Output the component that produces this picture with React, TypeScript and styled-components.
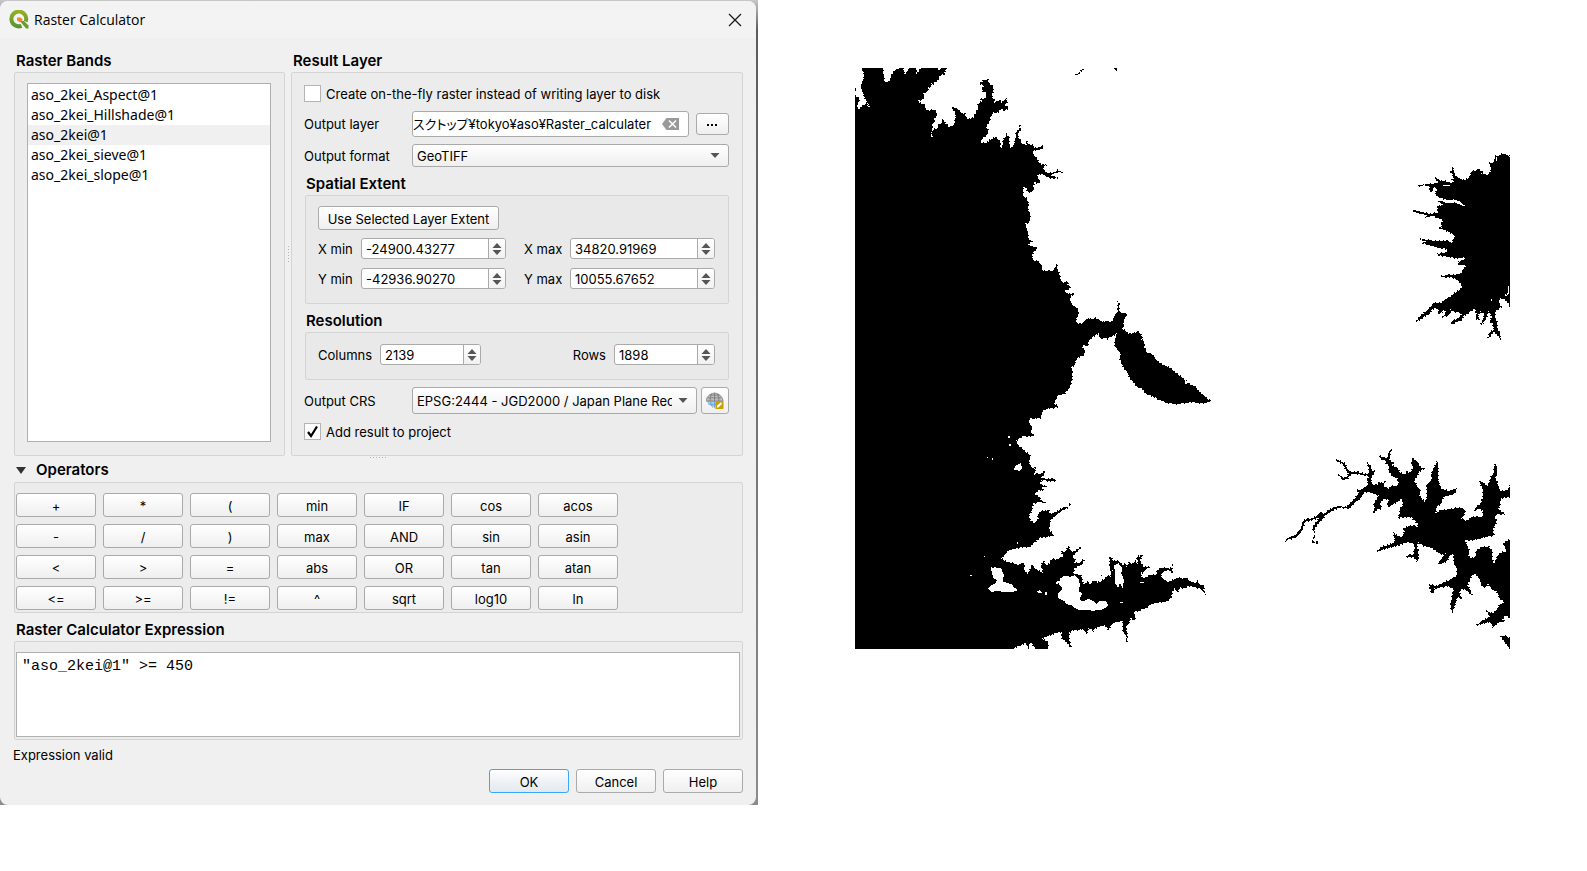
import React, { useState } from "react";
import styled, { createGlobalStyle, css } from "styled-components";

const GlobalStyle = createGlobalStyle`
  *, *::before, *::after { box-sizing: border-box; }
  body {
    margin: 0;
    background: #fff;
    color: #000;
    font-family: Inter, "Noto Sans CJK JP", sans-serif;
    font-size: 13px;
    line-height: 20px;
  }
  button, input, select, textarea { font: inherit; color: inherit; margin: 0; }
`;

const Page = styled.main`
  display: grid;
  grid-template-columns: minmax(0, 758fr) minmax(0, 829fr);
  align-items: start;
`;

const Backdrop = styled.div`
  background: linear-gradient(#c8c8c8, #5c5c5c 30px, #8c8c8c);
  padding: 1px 2px 0 0;
`;

const Dialog = styled.section`
  background: #f0f0f0;
  border-radius: 8px;
  overflow: hidden;
`;

const TitleBar = styled.header`
  display: flex;
  align-items: center;
  gap: 5px;
  height: 37px;
  padding: 0 14px 0 9px;
  background: #f3f3f3;
  font-family: "Open Sans", sans-serif;
`;

const Title = styled.h1`
  flex: 1;
  margin: 0;
  font-size: 14px;
  font-weight: 400;
`;

const CloseButton = styled.button`
  display: flex;
  padding: 0;
  border: 0;
  background: none;
`;

const Body = styled.div`
  padding: 14px 13px 12px 14px;
`;

const Columns = styled.div`
  display: grid;
  grid-template-columns: minmax(0, 271fr) 6px minmax(0, 452fr);
`;

const Section = styled.section`
  display: flex;
  flex-direction: column;
`;

const Heading = styled.h2`
  margin: 0;
  padding: 0 0 2px 2px;
  font-size: 15px;
  line-height: 18px;
  font-weight: 600;
`;

const panel = css`
  border: 1px solid #d4d4d4;
  border-radius: 2px;
  background: #ececec;
`;

const BandsPanel = styled.div`
  ${panel}
  flex: 1;
  display: flex;
  padding: 10px 13px 13px 12px;
`;

const BandList = styled.ul`
  flex: 1;
  margin: 0;
  padding: 1px 0 0;
  list-style: none;
  border: 1px solid #b0b0b0;
  background: #fff;
  font-family: "Noto Sans", sans-serif;
  font-size: 14px;
`;

const Band = styled.li<{ $selected?: boolean }>`
  padding-left: 3px;
  height: 20px;
  background: ${(p) => (p.$selected ? "#f0f0f0" : "transparent")};
`;

const Grip = styled.div<{ $vertical?: boolean }>`
  align-self: center;
  justify-self: center;
  margin: ${(p) => (p.$vertical ? "0" : "1px auto 0")};
  width: ${(p) => (p.$vertical ? "1px" : "17px")};
  height: ${(p) => (p.$vertical ? "17px" : "1px")};
  background: repeating-linear-gradient(
    ${(p) => (p.$vertical ? "180deg" : "90deg")},
    #b4b4b4 0 1px,
    transparent 1px 3px
  );
`;

const ResultPanel = styled.div`
  ${panel}
  padding: 12px 13px 15px 12px;
`;

const CheckLabel = styled.label`
  display: flex;
  align-items: center;
  gap: 5px;
  height: 17px;
  white-space: nowrap;
`;

const CheckBox = styled.input`
  appearance: none;
  width: 17px;
  height: 17px;
  border: 1px solid #b4b4b4;
  background: #fff;
`;

const CheckHolder = styled.span`
  display: grid;
  & > * { grid-area: 1 / 1; }
  svg { pointer-events: none; visibility: hidden; }
  input:checked + svg { visibility: visible; }
`;

const CheckRow = styled.div`
  margin-top: 9px;
`;

const FormRow = styled.div<{ $top: number; $height: number }>`
  display: grid;
  grid-template-columns: 108px minmax(0, 1fr);
  align-items: center;
  margin-top: ${(p) => p.$top}px;
  height: ${(p) => p.$height}px;
`;

const Field = styled.div<{ $gap: number }>`
  display: flex;
  align-items: center;
  gap: ${(p) => p.$gap}px;
`;

const outline = css`
  border: 1px solid #aaa;
  border-radius: 3px;
`;

const PathBox = styled.div`
  ${outline}
  flex: 1;
  min-width: 0;
  display: flex;
  align-items: center;
  height: 26px;
  padding-right: 9px;
  background: #fff;
`;

const PathInput = styled.input`
  flex: 1;
  min-width: 0;
  padding: 0;
  border: 0;
  background: transparent;
  font-feature-settings: "palt";
`;

const ClearButton = styled.button`
  display: flex;
  padding: 0;
  border: 0;
  background: none;
`;

const PushButton = styled.button<{ $width?: number; $height?: number; $primary?: boolean }>`
  ${outline}
  display: inline-flex;
  align-items: center;
  justify-content: center;
  flex: none;
  width: ${(p) => (p.$width ? `${p.$width}px` : "auto")};
  height: ${(p) => p.$height ?? 24}px;
  padding: 1px 4px 0;
  background: linear-gradient(#fff, #efefef);
  ${(p) =>
    p.$primary &&
    css`
      border-color: #3ea6f8;
      background: linear-gradient(#fdfdfd, #e2e8ef);
    `}
`;

const SelectBox = styled.span`
  display: grid;
  align-items: center;
  flex: 1;
  min-width: 0;
  & > * { grid-area: 1 / 1; }
  svg { justify-self: end; margin-right: 9px; pointer-events: none; }
`;

const Select = styled.select<{ $height: number }>`
  ${outline}
  appearance: none;
  width: 100%;
  min-width: 0;
  height: ${(p) => p.$height}px;
  padding: 0 24px 0 4px;
  background: linear-gradient(#fff, #efefef);
`;

const SubHeading = styled(Heading)`
  margin-top: 8px;
`;

const ExtentPanel = styled.div`
  ${panel}
  margin-left: 1px;
  background: #e9e9e9;
  padding: 10px 13px 14px 12px;
`;

const SpinGrid = styled.div`
  display: grid;
  grid-template-columns: 43px minmax(0, 1fr) 18px 46px minmax(0, 1fr);
  row-gap: 9px;
  margin-top: 8px;
  align-items: center;
`;

const XMax = styled.label`
  grid-column: 4;
`;

const ResolutionPanel = styled(ExtentPanel)`
  display: flex;
  align-items: center;
  justify-content: space-between;
  padding: 11px 13px 14px 12px;
`;

const SpinLabel = styled.label`
  display: flex;
  align-items: center;
  gap: 8px;
`;

const SpinFrame = styled.span<{ $width?: number }>`
  ${outline}
  display: flex;
  width: ${(p) => (p.$width ? `${p.$width}px` : "100%")};
  height: 21px;
  background: #fff;
  overflow: hidden;
`;

const SpinInput = styled.input`
  flex: 1;
  min-width: 0;
  padding: 0 0 0 4px;
  border: 0;
  background: transparent;
`;

const SpinSteps = styled.span`
  display: flex;
  flex-direction: column;
  justify-content: center;
  gap: 2px;
  width: 17px;
  border-left: 1px solid #aaa;
  background: linear-gradient(#fff, #f1f1f1);
`;

const StepButton = styled.button`
  display: flex;
  justify-content: center;
  padding: 0;
  border: 0;
  background: none;
`;

const OperatorHeader = styled.button`
  display: flex;
  align-items: center;
  gap: 10px;
  height: 20px;
  margin-top: 3px;
  padding: 0 2px 2px;
  border: 0;
  background: none;
  font-size: 15px;
  line-height: 18px;
  font-weight: 600;
`;

const OperatorPanel = styled.div`
  ${panel}
  display: grid;
  grid-template-columns: repeat(7, 80px);
  gap: 7px;
  margin-top: 1px;
  padding: 10px 1px 2px;
`;

const ExpressionHeading = styled(Heading)`
  margin-top: 8px;
`;

const ExpressionPanel = styled.div`
  ${panel}
  display: flex;
  padding: 10px 2px 2px 1px;
`;

const Expression = styled.textarea`
  flex: 1;
  height: 85px;
  padding: 4px 5px;
  border: 1px solid #b0b0b0;
  border-radius: 0;
  resize: none;
  background: #fff;
  font-family: "Liberation Mono", monospace;
  font-size: 15px;
`;

const Status = styled.p`
  margin: 5px 0 0 -1px;
`;

const Footer = styled.footer`
  display: flex;
  justify-content: flex-end;
  gap: 7px;
  margin-top: 4px;
`;

const MapPane = styled.figure`
  margin: 0;
  padding: 68px 77px 0 97px;
  svg { display: block; width: 100%; height: auto; }
`;

const QgisLogo = () => (
  <svg width="20" height="20" viewBox="0 0 20 20" aria-hidden="true">
    <defs>
      <linearGradient id="q" x1="0" y1="0" x2="0" y2="1">
        <stop offset="0" stopColor="#93b023" />
        <stop offset="1" stopColor="#589632" />
      </linearGradient>
    </defs>
    <path d="M12.500 15.800A7.400 7.400 0 1 1 16.700 11.500" fill="none" stroke="url(#q)" strokeWidth="4" />
    <path d="M11 11h4l4.500 4.500V18.500h-2.500z" fill="#6a9e2c" />
    <path d="M8 7.500h3.800l2 2.400-2.600 2.600L8 10.500z" fill="#f08a2c" />
  </svg>
);

const CloseIcon = () => (
  <svg width="14" height="14" viewBox="0 0 14 14" aria-hidden="true">
    <path d="M1 1l12 12M13 1L1 13" stroke="#1a1a1a" strokeWidth="1.3" />
  </svg>
);

const Arrow = ({ up }: { up?: boolean }) => (
  <svg width="10" height="5" viewBox="0 0 10 5" aria-hidden="true">
    <path d={up ? "M5 0l4.5 5h-9z" : "M5 5L.5 0h9z"} fill="#555" />
  </svg>
);

const GlobeIcon = () => (
  <svg width="20" height="20" viewBox="0 0 20 20" aria-hidden="true">
    <path d="M1.500 10a8.500 8.500 0 0 0 16 0z" fill="#a9d0f5" stroke="#6fa5d8" strokeWidth=".8" />
    <path d="M0 10Q1 2.500 9.500 1Q18 2.500 19 10z" fill="#bdbdbd" stroke="#7a7a7a" strokeWidth=".8" />
    <path d="M9.500 1v9M2 6.500h15M4 3.500h11M6 2Q4.500 6 4.500 10M13 2q1.500 4 1.500 8" fill="none" stroke="#707070" strokeWidth=".8" />
    <path d="M9.500 10v8M5 10q.5 4 2.500 7.500M2.500 13.500h14" fill="none" stroke="#5f9bd6" strokeWidth=".8" />
    <rect x="10.500" y="10" width="9" height="9" rx="1" fill="#c8a000" />
    <path d="M12 17.500l.5-2.500 4-3.500 1.500 1.500-4 4z" fill="#fff" />
  </svg>
);

type SpinProps = { id: string; value: string; width?: number; name: string };

const Spin = ({ id, value, width, name }: SpinProps) => {
  const [text, setText] = useState(value);
  return (
    <SpinFrame $width={width}>
      <SpinInput id={id} value={text} inputMode="decimal" onChange={(e) => setText(e.target.value)} />
      <SpinSteps>
        <StepButton type="button" aria-label={`Increase ${name}`}><Arrow up /></StepButton>
        <StepButton type="button" aria-label={`Decrease ${name}`}><Arrow /></StepButton>
      </SpinSteps>
    </SpinFrame>
  );
};

const Check = ({ label, checked }: { label: string; checked?: boolean }) => (
  <CheckLabel>
    <CheckHolder>
      <CheckBox type="checkbox" defaultChecked={checked} />
      <svg width="17" height="17" viewBox="0 0 17 17" aria-hidden="true">
        <path d="M4 9l3 4 6-9.500" fill="none" stroke="#000" strokeWidth="2.200" />
      </svg>
    </CheckHolder>
    {label}
  </CheckLabel>
);

/* Each part of the raster is drawn on a grid three times finer than its cells. */
const regions: { at: [number, number]; black: string; white?: string; line?: string }[] = [
  {
    at: [-15, -18],
    black:
      "M66,54 L128,54 130,62 132,94 138,96 148,94 153,88 155,74 165,62 178,56 190,54 192,70 197,72 204,62 208,54 226,54 230,60 226,76 236,66 244,54 295,54 296,62 304,54 320,54 312,68 317,76 308,72 298,78 290,94 282,96 280,102 274,100 272,112 266,110 262,124 250,130 252,142 246,150 232,152 236,158 252,164 256,178 268,182 274,178 286,182 290,196 282,206 284,216 276,220 278,234 272,246 274,264 278,262 276,244 282,240 284,236 294,238 296,224 304,222 310,208 316,222 324,226 328,236 334,230 345,222 346,204 350,198 346,186 336,174 342,172 356,180 366,192 374,190 378,204 388,208 402,202 410,184 416,178 414,162 426,154 424,148 436,146 440,138 438,124 430,126 426,118 434,108 428,104 420,100 416,98 428,96 432,88 438,92 444,86 446,100 452,106 458,108 460,124 456,134 458,146 464,152 462,160 480,150 484,158 498,148 502,156 492,166 506,174 494,182 484,176 470,190 458,186 456,198 450,202 448,218 440,226 438,232 444,240 442,254 428,264 420,276 430,280 446,276 452,268 462,264 468,262 474,270 480,274 480,292 486,294 490,270 500,254 506,262 508,284 512,294 520,290 526,270 528,246 538,240 540,226 542,238 534,248 534,262 542,270 544,280 556,286 560,284 558,272 566,284 578,286 584,294 600,292 610,286 604,298 584,300 576,306 582,318 592,326 594,336 604,346 620,344 608,352 612,362 618,368 632,370 648,366 652,360 662,366 640,370 632,378 654,384 640,386 626,382 612,374 600,372 592,376 594,388 602,392 594,400 584,396 580,408 582,420 574,426 560,424 560,412 550,412 550,438 560,446 566,462 564,480 570,492 568,518 556,520 558,536 562,542 564,566 576,574 562,584 592,594 584,604 578,610 576,622 584,634 594,632 600,640 606,652 608,664 616,664 628,662 636,666 644,656 650,646 652,660 658,668 660,690 668,698 686,696 680,704 694,712 684,718 670,724 678,730 704,732 690,738 692,760 702,770 712,774 716,790 708,806 706,818 712,822 728,822 738,808 750,806 760,810 766,804 776,812 790,818 800,814 818,816 822,798 834,790 832,776 834,766 832,754 838,764 836,780 842,794 862,792 852,806 850,826 846,840 L45,840 45,136 50,140 58,146 54,162 50,172 56,178 64,172 70,166 80,162 82,172 90,170 84,160 78,152 70,132 62,104 70,94 72,70Z M825,54h5v6l-3,3zM708,74l8,-6 2,3 -8,4zM722,64l5,-7 2,2 -5,7zM45,117h3v5h-3z",
  },
  {
    at: [65, 212],
    black:
      "M0,60 L460,85 468,120 472,132 486,132 500,122 512,116 526,120 536,118 544,128 560,124 580,126 584,108 594,98 606,100 622,102 612,112 610,136 604,146 616,152 626,162 640,160 654,156 664,166 670,184 674,206 680,218 694,222 702,230 712,244 730,256 752,264 766,278 780,288 796,302 812,314 826,320 838,336 852,346 864,360 872,356 868,366 840,370 820,366 800,368 770,372 740,368 720,360 706,352 680,342 666,326 652,320 640,306 630,294 624,280 612,264 604,250 600,236 602,222 594,210 586,200 586,180 590,160 576,168 562,176 552,172 548,178 540,172 536,160 524,166 512,176 504,186 504,198 490,194 486,204 494,212 492,226 478,230 468,238 464,254 454,262 458,290 450,320 440,334 432,342 412,346 408,358 402,370 414,380 398,384 380,386 366,394 362,414 340,416 330,414 324,428 336,440 330,454 342,468 322,464 304,470 286,484 294,496 306,508 318,520 330,528 0,600Z M-195,0H100V600H-195z",
    white: "M795,302h5v3h4v4h-4v3h-4zM662,178h3v3h-3z",
  },
  {
    at: [105, 352],
    black:
      "M-315,-100 L0,-100 0,0 208,0 206,16 216,22 210,36 222,46 206,48 190,46 166,64 178,80 190,90 200,98 212,108 206,122 210,136 216,142 222,150 226,142 224,158 216,166 232,162 244,162 256,150 252,164 242,174 260,176 286,178 290,184 262,182 244,180 240,192 256,200 244,202 250,212 236,210 222,222 240,232 242,242 258,248 236,246 220,250 216,264 216,270 206,288 212,304 222,310 236,296 234,284 244,272 256,274 266,270 270,282 290,276 304,266 320,260 322,264 306,272 290,284 270,300 268,330 280,346 262,350 240,352 220,370 208,382 190,380 164,386 146,390 136,402 124,416 130,420 142,426 160,430 176,436 186,428 194,436 192,448 202,464 210,450 216,434 226,448 240,454 252,460 244,436 250,422 258,436 270,430 276,416 288,420 300,414 312,410 304,394 316,398 326,378 330,392 340,396 364,380 346,400 336,408 346,422 340,430 356,430 374,416 366,434 350,440 342,446 340,460 352,464 364,466 366,484 372,494 384,484 390,494 400,482 412,488 424,484 436,474 444,466 452,470 458,450 450,434 448,410 456,416 460,424 476,424 488,434 500,440 508,428 518,432 526,424 534,436 532,416 548,402 540,420 548,440 566,442 552,450 542,460 544,474 560,472 574,464 590,464 594,450 606,442 620,448 634,444 638,434 636,458 628,450 616,452 602,464 606,476 624,486 640,480 654,474 668,476 680,474 690,486 708,490 712,480 718,494 734,498 730,508 738,524 722,506 700,500 684,498 672,506 660,502 652,516 644,504 636,516 634,530 622,544 600,546 584,550 572,552 560,564 544,568 536,574 522,572 526,600 512,594 506,612 498,620 502,650 490,636 488,614 490,600 470,606 454,612 446,630 436,614 410,622 400,632 386,622 380,640 368,628 340,630 326,638 328,662 334,684 318,664 306,656 306,636 294,636 270,646 258,650 246,656 266,668 262,686 228,686 210,664 206,682 196,668 180,676 156,687 -315,687Z M326,252h6v3h-6zM499,656h3v8h-3z",
    white:
      "M92,436 L98,446 104,442 124,446 128,456 132,466 128,484 140,488 156,494 162,502 174,510 160,516 130,516 110,512 96,516 84,506 90,498 104,492 112,480 100,474 96,460 92,444Z M300,476 L312,468 330,470 344,466 356,476 360,494 356,514 366,520 358,540 370,544 384,536 400,544 410,552 418,542 438,544 446,556 430,568 400,572 370,570 350,568 334,556 318,552 314,544 296,536 294,522 304,512 306,502 296,494Z M160,150 L168,136 182,130 186,144 180,152Z M462,436 L476,430 486,444 484,460 492,480 488,504 480,490 474,504 466,490 466,464Z M143,48h6v5h-6zM148,73h6v5h-6zM81,111h3v4h-3zM95,114h4v5h-4zM72,407h4v4h-4zM31,464h5v4h-5zM171,366h3v6h-3zM480,545h9v4h-9zM226,510l8,4 4,-5 8,9 -8,2 -6,-3zM256,516h5v8h-5zM384,484l4,-8v10zM288,486l8,-4 2,5 -8,8zM541,486h12v3h-12z",
    line: "M452,412v34l6,24M494,430l8,30M536,406l6,40M590,456l14,-10 32,2M424,466v3M372,492l-10,30M436,474l8,14 14,-18M546,460l10,-14",
  },
  {
    at: [415, 362],
    black:
      "M262,180 L276,180 286,170 296,166 292,150 298,140 290,136 276,134 250,130 240,136 232,146 218,150 208,136 214,138 218,146 230,142 236,130 228,120 222,106 212,98 196,90 210,92 224,100 232,116 242,126 262,126 286,132 298,130 296,112 292,98 302,110 306,122 316,124 306,136 302,150 308,164 322,166 328,156 336,160 344,156 340,168 356,176 366,166 378,170 386,160 384,146 370,140 356,124 358,106 348,100 350,92 334,88 326,76 340,82 352,84 358,64 362,62 360,80 356,90 370,98 366,106 384,116 390,128 404,134 410,126 420,130 430,112 424,100 428,86 436,92 444,96 450,110 460,116 448,124 440,140 432,152 444,172 450,182 448,198 464,216 470,206 472,164 486,150 484,132 494,110 502,94 504,130 506,160 514,176 526,180 538,184 560,174 554,190 540,196 520,200 514,220 500,230 496,250 516,240 540,238 570,232 586,240 582,256 574,266 590,274 604,262 624,260 640,264 638,240 624,236 612,244 622,228 632,222 640,200 640,180 626,152 640,158 652,170 660,152 664,140 672,130 674,100 680,110 680,130 676,144 682,160 690,184 704,184 716,178 720,166 720,200 704,202 690,206 690,226 684,236 706,254 684,252 672,260 680,270 676,284 668,300 672,316 650,320 620,328 600,330 584,330 590,344 598,362 592,376 602,384 616,382 618,364 634,352 656,350 668,366 666,384 672,402 684,376 694,368 710,364 700,340 720,328 720,562 704,556 696,568 704,574 684,576 670,592 660,576 640,580 620,586 632,576 660,560 652,544 668,550 680,540 690,524 704,516 690,506 680,484 668,480 654,460 648,470 640,472 632,456 624,436 612,432 604,440 598,450 592,466 600,480 606,496 590,480 576,476 568,488 576,508 562,500 556,520 548,544 542,536 546,500 552,478 536,468 510,472 490,476 494,484 484,490 480,470 476,464 500,468 520,458 540,450 560,438 562,420 552,400 552,372 540,376 530,394 510,404 506,396 520,380 528,370 514,374 500,364 484,352 460,348 446,336 440,344 444,362 446,376 442,394 430,380 406,382 416,376 432,374 434,352 430,340 410,336 390,344 370,350 346,356 322,364 336,350 360,344 376,336 370,306 380,318 396,322 404,306 402,296 420,286 440,290 446,300 444,282 432,270 424,262 404,260 384,264 390,250 392,234 400,224 396,204 384,214 368,222 360,230 352,224 358,208 344,206 330,216 334,236 322,238 308,252 314,234 312,222 322,206 326,196 310,190 296,186 282,186 272,204 250,222 236,236 212,232 188,240 166,256 152,272 138,288 130,300 134,308 128,298 134,284 150,262 132,268 104,276 98,298 82,320 60,328 50,328 50,334 47,334 50,326 64,322 78,316 94,296 98,276 108,268 130,266 150,248 162,252 180,238 206,228 230,232 250,210 268,190Z M694,620L708,618 720,626 720,656 712,646 704,636Z M131,318h3v6h-3zM126,334h7v4h-7zM141,337h3v4h-3z",
    line: "M49,332 L52,326 66,322 80,314 94,296 100,276 120,268 134,266M130,302l6,-18 12,-14",
  },
  {
    at: [535, 72],
    black:
      "M316,48 L330,48 334,40 346,44 358,48 360,60 360,508 356,490 344,478 330,474 326,490 334,500 322,510 314,514 316,536 322,548 320,566 328,576 332,598 322,584 312,576 304,584 294,596 298,580 312,568 308,550 300,544 306,530 296,512 290,530 280,548 272,554 282,532 284,516 270,514 262,520 268,540 258,536 260,520 254,504 246,510 232,522 220,528 216,538 200,546 184,552 186,544 204,536 216,524 204,514 196,518 180,506 184,516 176,526 160,530 168,518 164,508 152,520 144,518 148,506 132,504 124,512 118,524 104,528 92,538 78,544 90,530 108,514 120,502 132,488 146,490 156,488 170,476 184,470 190,462 206,452 216,442 212,428 198,416 184,412 166,412 150,408 174,406 194,406 214,400 222,384 232,380 222,374 204,374 206,366 226,358 220,352 196,354 176,350 150,346 140,342 166,338 176,330 160,324 140,322 116,314 98,312 114,308 90,296 110,300 130,302 150,304 170,302 184,308 196,306 188,300 196,290 190,282 170,272 150,264 158,262 152,252 160,244 156,238 140,232 128,226 118,228 106,234 114,224 96,220 76,216 68,212 88,214 120,222 146,218 140,206 156,204 140,200 160,194 144,184 168,186 184,190 204,186 200,182 164,178 144,170 136,160 142,146 130,140 124,158 118,148 122,138 102,136 86,138 100,134 126,132 146,128 134,112 152,124 166,124 178,128 196,130 184,116 192,118 186,96 178,96 190,100 188,82 196,108 212,118 228,120 240,110 246,92 258,94 264,86 276,96 272,102 292,104 304,94 302,82 298,70 312,68Z",
    white:
      "M160,182 L176,182 192,178 208,184 226,198 222,200 206,192 190,186 176,190 160,186Z M355,436l3,4v20l-6,4zM160,134h20v3h-20zM346,462l4,4 -3,8zM302,476l4,3 -3,8zM318,52h4v12h-4z",
    line: "M134,112l20,16 24,10M188,82v18l14,22 20,8M146,184l24,6M140,202l22,-6M68,211l20,8 34,6M296,512l18,20M262,520l20,-4 16,-6M98,309l20,-3 20,4M80,543l24,-18 26,-26",
  },
];

const RasterMap = () => (
  <svg viewBox="0 0 655 581" role="img" aria-label="Raster result" shapeRendering="crispEdges">
    {regions.map((r, i) => (
      <g key={i} transform={`translate(${r.at[0]} ${r.at[1]}) scale(0.33333)`}>
        <path d={r.black} stroke="#000" strokeWidth="5" strokeDasharray="3 7 4 9" />
        {r.line && <path d={r.line} fill="none" stroke="#000" strokeWidth="4" />}
      </g>
    ))}
    {regions.map((r, i) =>
      r.white ? (
        <path key={i} d={r.white} fill="#fff" transform={`translate(${r.at[0]} ${r.at[1]}) scale(0.33333)`} />
      ) : null
    )}
  </svg>
);

const bands = ["aso_2kei_Aspect@1", "aso_2kei_Hillshade@1", "aso_2kei@1", "aso_2kei_sieve@1", "aso_2kei_slope@1"];

const operators = [
  "+", "*", "(", "min", "IF", "cos", "acos",
  "-", "/", ")", "max", "AND", "sin", "asin",
  "<", ">", "=", "abs", "OR", "tan", "atan",
  "<=", ">=", "!=", "^", "sqrt", "log10", "ln",
];

export default function App() {
  const [path, setPath] = useState("スクトップ¥tokyo¥aso¥Raster_calculater");
  const [expression, setExpression] = useState('"aso_2kei@1" >= 450');
  return (
    <Page>
      <GlobalStyle />
      <Backdrop>
        <Dialog aria-labelledby="title">
          <TitleBar>
            <QgisLogo />
            <Title id="title">Raster Calculator</Title>
            <CloseButton type="button" aria-label="Close"><CloseIcon /></CloseButton>
          </TitleBar>
          <Body>
            <Columns>
              <Section>
                <Heading>Raster Bands</Heading>
                <BandsPanel>
                  <BandList>
                    {bands.map((b) => (
                      <Band key={b} $selected={b === "aso_2kei@1"}>{b}</Band>
                    ))}
                  </BandList>
                </BandsPanel>
              </Section>
              <Grip $vertical />
              <Section>
                <Heading>Result Layer</Heading>
                <ResultPanel>
                  <Check label="Create on-the-fly raster instead of writing layer to disk" />
                  <FormRow $top={9} $height={26}>
                    <label htmlFor="path">Output layer</label>
                    <Field $gap={7}>
                      <PathBox>
                        <PathInput id="path" value={path} onChange={(e) => setPath(e.target.value)} />
                        <ClearButton type="button" aria-label="Clear">
                          <svg width="17" height="12" viewBox="0 0 17 12" aria-hidden="true">
                            <path d="M0 6l4.500-6H17v12H4.500z" fill="#999" />
                            <path d="M7 2.500l7 7M14 2.500l-7 7" stroke="#fff" strokeWidth="1.500" />
                          </svg>
                        </ClearButton>
                      </PathBox>
                      <PushButton type="button" $width={33} $height={22} aria-label="Browse">
                        <svg width="11" height="2" viewBox="0 0 11 2" aria-hidden="true">
                          <path d="M0 0h2v2H0zM4 0h2v2H4zM8 0h2v2H8z" />
                        </svg>
                      </PushButton>
                    </Field>
                  </FormRow>
                  <FormRow $top={7} $height={23}>
                    <label htmlFor="format">Output format</label>
                    <SelectBox>
                      <Select id="format" $height={23}><option>GeoTIFF</option></Select>
                      <Arrow />
                    </SelectBox>
                  </FormRow>
                  <SubHeading as="h3">Spatial Extent</SubHeading>
                  <ExtentPanel>
                    <PushButton type="button" $width={181}>Use Selected Layer Extent</PushButton>
                    <SpinGrid>
                      <label htmlFor="xmin">X min</label>
                      <Spin id="xmin" name="X min" value="-24900.43277" />
                      <XMax htmlFor="xmax">X max</XMax>
                      <Spin id="xmax" name="X max" value="34820.91969" />
                      <label htmlFor="ymin">Y min</label>
                      <Spin id="ymin" name="Y min" value="-42936.90270" />
                      <XMax htmlFor="ymax">Y max</XMax>
                      <Spin id="ymax" name="Y max" value="10055.67652" />
                    </SpinGrid>
                  </ExtentPanel>
                  <SubHeading as="h3">Resolution</SubHeading>
                  <ResolutionPanel>
                    <SpinLabel htmlFor="columns">Columns <Spin id="columns" name="columns" width={101} value="2139" /></SpinLabel>
                    <SpinLabel htmlFor="rows">Rows <Spin id="rows" name="rows" width={101} value="1898" /></SpinLabel>
                  </ResolutionPanel>
                  <FormRow $top={7} $height={27}>
                    <label htmlFor="crs">Output CRS</label>
                    <Field $gap={4}>
                      <SelectBox>
                        <Select id="crs" $height={27}>
                          <option>EPSG:2444 - JGD2000 / Japan Plane Rectangular CS II</option>
                        </Select>
                        <Arrow />
                      </SelectBox>
                      <PushButton type="button" $width={28} $height={27} aria-label="Select CRS"><GlobeIcon /></PushButton>
                    </Field>
                  </FormRow>
                  <CheckRow>
                    <Check label="Add result to project" checked />
                  </CheckRow>
                </ResultPanel>
              </Section>
            </Columns>
            <Grip />
            <OperatorHeader type="button" aria-expanded="true">
              <svg width="10" height="7" viewBox="0 0 10 7" aria-hidden="true">
                <path d="M0 0h10L5 7z" fill="#333" />
              </svg>
              Operators
            </OperatorHeader>
            <OperatorPanel>
              {operators.map((o) => (
                <PushButton key={o} type="button" $width={80}>{o}</PushButton>
              ))}
            </OperatorPanel>
            <ExpressionHeading id="expression-title">Raster Calculator Expression</ExpressionHeading>
            <ExpressionPanel>
              <Expression
                aria-labelledby="expression-title"
                spellCheck={false}
                value={expression}
                onChange={(e) => setExpression(e.target.value)}
              />
            </ExpressionPanel>
            <Status>Expression valid</Status>
            <Footer>
              <PushButton type="button" $width={80} $primary>OK</PushButton>
              <PushButton type="button" $width={80}>Cancel</PushButton>
              <PushButton type="button" $width={80}>Help</PushButton>
            </Footer>
          </Body>
        </Dialog>
      </Backdrop>
      <MapPane><RasterMap /></MapPane>
    </Page>
  );
}
